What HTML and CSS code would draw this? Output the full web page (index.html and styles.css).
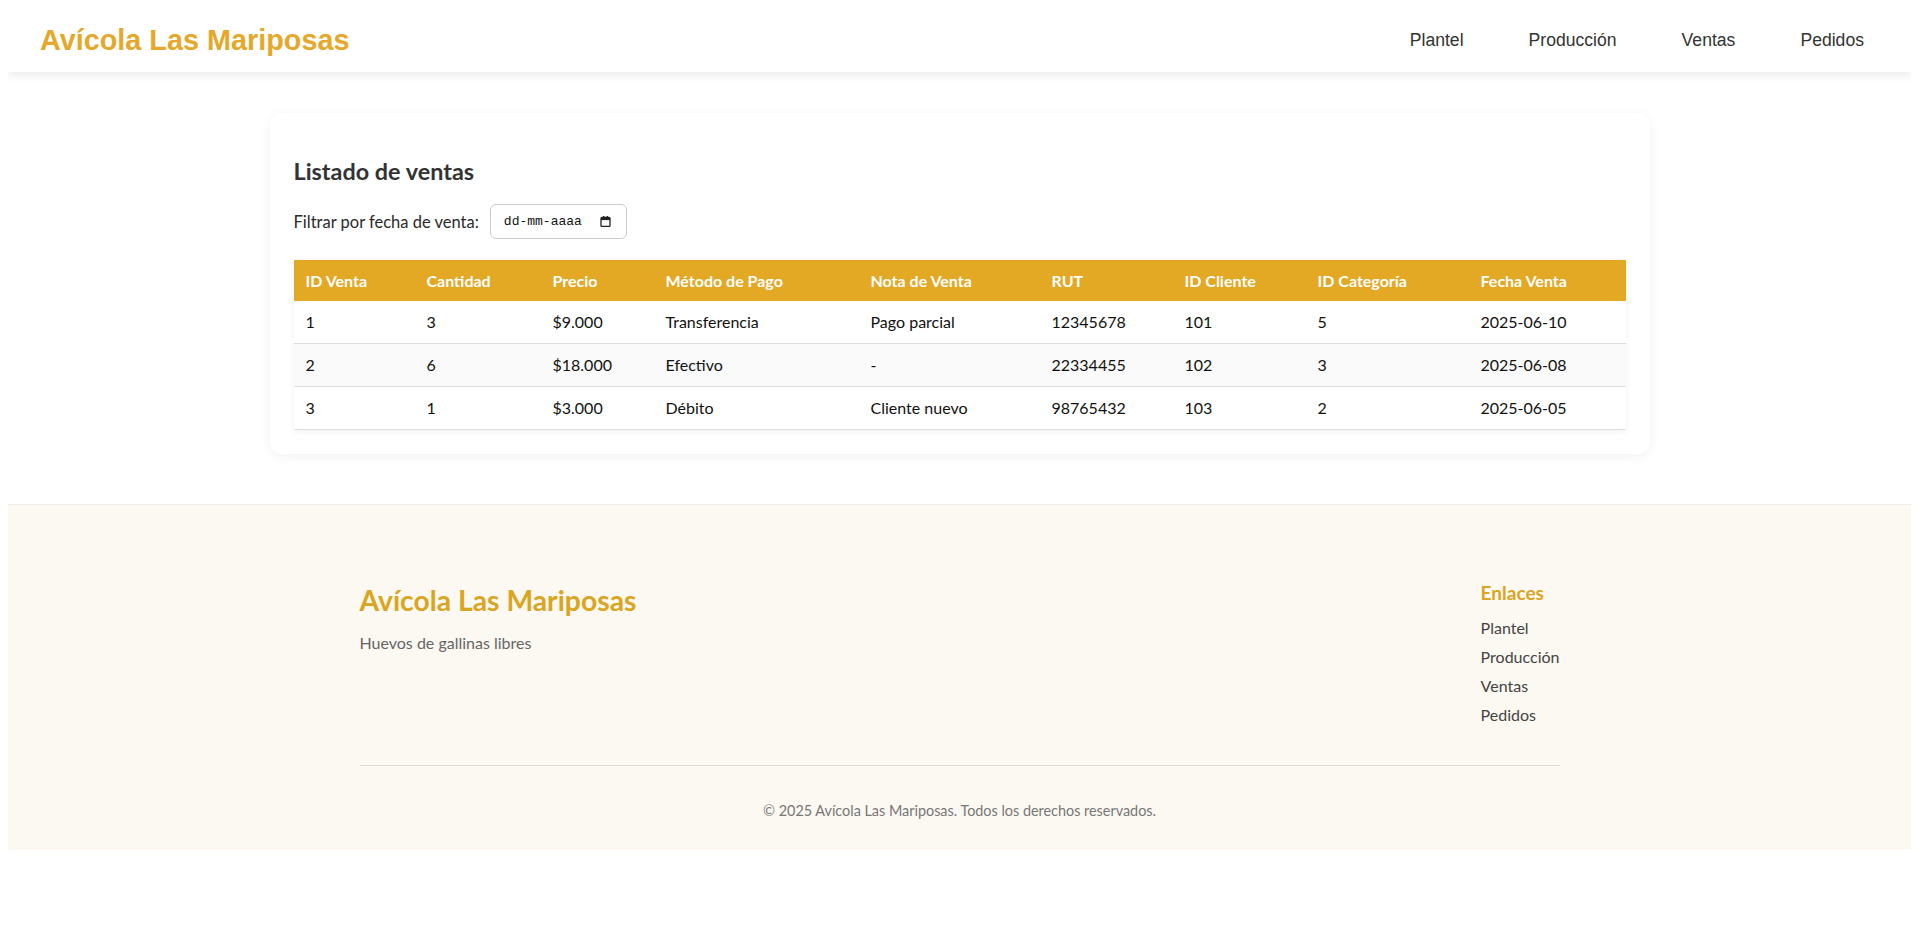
FILE: index.html
```html
<!DOCTYPE html>
<html lang="es">
<head>
<meta charset="utf-8">
<title>Avícola Las Mariposas - Ventas</title>
<link rel="stylesheet" href="styles.css">
</head>
<body>
<header class="site-header">
  <a class="logo" href="#">Avícola Las Mariposas</a>
  <nav class="main-nav">
    <a href="#">Plantel</a>
    <a href="#">Producción</a>
    <a href="#">Ventas</a>
    <a href="#">Pedidos</a>
  </nav>
</header>

<main class="main">
  <section class="card">
    <h2 class="card-title">Listado de ventas</h2>
    <div class="filter-row">
      <label class="filter-label" for="fecha">Filtrar por fecha de venta:</label>
      <div class="date-field" id="fecha">
        <span class="date-text">dd-mm-aaaa</span>
        <svg class="cal-icon" width="11" height="11" viewBox="0 0 11 11" aria-hidden="true">
          <rect x="1" y="1.5" width="9" height="9" rx="1" fill="none" stroke="#222" stroke-width="1.3"/>
          <rect x="1" y="1.5" width="9" height="2.6" fill="#222"/>
          <rect x="3" y="0" width="1.3" height="2" fill="#222"/>
          <rect x="6.7" y="0" width="1.3" height="2" fill="#222"/>
        </svg>
      </div>
    </div>
    <table class="sales">
      <colgroup>
        <col class="c1"><col class="c2"><col class="c3"><col class="c4"><col class="c5">
        <col class="c6"><col class="c7"><col class="c8"><col class="c9">
      </colgroup>
      <thead>
        <tr>
          <th>ID Venta</th><th>Cantidad</th><th>Precio</th><th>Método de Pago</th><th>Nota de Venta</th>
          <th>RUT</th><th>ID Cliente</th><th>ID Categoría</th><th>Fecha Venta</th>
        </tr>
      </thead>
      <tbody>
        <tr>
          <td>1</td><td>3</td><td>$9.000</td><td>Transferencia</td><td>Pago parcial</td>
          <td>12345678</td><td>101</td><td>5</td><td>2025-06-10</td>
        </tr>
        <tr>
          <td>2</td><td>6</td><td>$18.000</td><td>Efectivo</td><td>-</td>
          <td>22334455</td><td>102</td><td>3</td><td>2025-06-08</td>
        </tr>
        <tr>
          <td>3</td><td>1</td><td>$3.000</td><td>Débito</td><td>Cliente nuevo</td>
          <td>98765432</td><td>103</td><td>2</td><td>2025-06-05</td>
        </tr>
      </tbody>
    </table>
  </section>
</main>

<footer class="site-footer">
  <div class="footer-inner">
    <div class="footer-brand">
      <h3 class="footer-title">Avícola Las Mariposas</h3>
      <p class="footer-tagline">Huevos de gallinas libres</p>
    </div>
    <div class="footer-links">
      <h4 class="footer-heading">Enlaces</h4>
      <ul class="footer-list">
        <li><a href="#">Plantel</a></li>
        <li><a href="#">Producción</a></li>
        <li><a href="#">Ventas</a></li>
        <li><a href="#">Pedidos</a></li>
      </ul>
    </div>
  </div>
  <div class="footer-bottom">
    <p class="copyright">© 2025 Avícola Las Mariposas. Todos los derechos reservados.</p>
  </div>
</footer>
</body>
</html>
```

FILE: styles.css
```css
* { box-sizing: border-box; }

body {
  margin: 8px;
  font-family: Lato, "Segoe UI", sans-serif;
  color: #222;
  background: #fff;
}

a { text-decoration: none; color: inherit; }

/* Header */
.site-header {
  height: 64px;
  padding: 0 32px;
  display: flex;
  align-items: center;
  justify-content: space-between;
  background: #fff;
  box-shadow: 0 2px 10px rgba(0, 0, 0, 0.1);
  font-family: "Liberation Sans", Arial, sans-serif;
}

.logo {
  font-size: 28.8px;
  font-weight: 700;
  color: #e5a82a;
}

.main-nav {
  display: flex;
  gap: 33px;
  margin-right: -1px;
}

.main-nav a {
  padding: 0 16px;
  font-size: 17.6px;
  color: #333;
}

/* Main */
.main {
  padding: 41px 0 50px;
}

.card {
  max-width: 1380px;
  margin: 0 auto;
  background: #fff;
  border-radius: 12px;
  padding: 24px;
  box-shadow: 0 2px 12px rgba(0, 0, 0, 0.06);
}

.card-title {
  margin: 20px 0 19px;
  font-size: 23.4px;
  font-weight: 700;
  color: #333;
}

.filter-row {
  display: flex;
  align-items: center;
  gap: 11px;
  margin-bottom: 21px;
}

.filter-label {
  font-size: 16.5px;
  color: #2a2a2a;
}

.date-field {
  width: 137px;
  height: 35px;
  display: flex;
  align-items: center;
  justify-content: space-between;
  padding: 0 15px 0 13px;
  border: 1px solid #ccc;
  border-radius: 6px;
  background: #fff;
}

.date-text {
  font-family: "Liberation Mono", monospace;
  font-size: 13px;
  color: #111;
}

.cal-icon { display: block; }

/* Table */
.sales {
  width: 100%;
  table-layout: fixed;
  border-collapse: collapse;
  font-size: 16px;
  box-shadow: 0 2px 6px rgba(0, 0, 0, 0.06);
}

.c1 { width: 121px; }
.c2 { width: 126px; }
.c3 { width: 113px; }
.c4 { width: 205px; }
.c5 { width: 181px; }
.c6 { width: 133px; }
.c7 { width: 133px; }
.c8 { width: 163px; }
.c9 { width: 157px; }

.sales th {
  background: #e3a824;
  color: #fff;
  font-weight: 700;
  text-align: left;
  padding: 12px;
  line-height: 17px;
}

.sales td {
  padding: 12px;
  line-height: 18px;
  border-bottom: 1px solid #ddd;
  color: #111;
}

.sales tbody tr:nth-child(even) { background: #fafafa; }

/* Footer */
.site-footer {
  background: #fcf8f2;
  border-top: 1px solid #eee;
  padding-top: 76px;
}

.footer-inner {
  max-width: 1200px;
  margin: 0 auto;
  display: flex;
  justify-content: space-between;
  align-items: flex-start;
}

.footer-title {
  margin: 2px 0 16px;
  font-size: 28.3px;
  font-weight: 700;
  color: #daa520;
}

.footer-tagline {
  margin: 0;
  font-size: 16px;
  color: #666;
}

.footer-heading {
  margin: 0 0 14px;
  font-size: 19px;
  font-weight: 700;
  color: #daa520;
}

.footer-list {
  list-style: none;
  margin: 0;
  padding: 0;
  display: flex;
  flex-direction: column;
  gap: 10px;
  font-size: 16px;
  color: #444;
}

.footer-bottom {
  max-width: 1200px;
  margin: 41px auto 0;
  border-top: 1px solid #ddd;
  padding: 36px 0 31px;
  text-align: center;
}

.copyright {
  margin: 0;
  font-size: 14.4px;
  color: #777;
}
```
